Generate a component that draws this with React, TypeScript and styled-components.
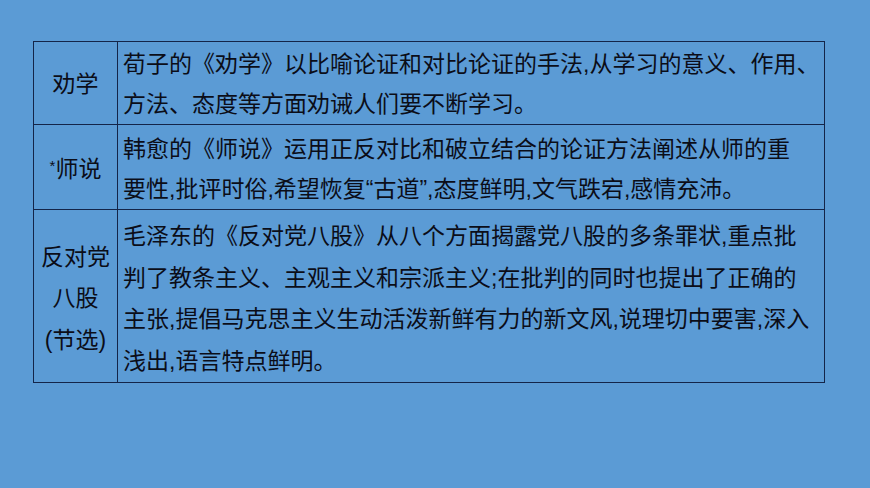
import React from "react";
import styled, { createGlobalStyle } from "styled-components";

const Global = createGlobalStyle`
  html, body {
    margin: 0;
    padding: 0;
    background: #5b9bd5;
  }
  body {
    font-family: "Liberation Sans", "Noto Sans CJK SC", sans-serif;
  }
`;

const Page = styled.div`
  width: 870px;
  height: 488px;
  box-sizing: border-box;
  padding: 41px 0 0 33px;
  background: #5b9bd5;
`;

const Table = styled.table`
  width: 792px;
  border-collapse: collapse;
  table-layout: fixed;
  font-family: "Liberation Sans", "Noto Sans CJK SC", sans-serif;
  font-size: 23px;
  color: #0b0d18;
`;

const Row = styled.tr<{ $h: number; $lh: number }>`
  height: ${(p) => p.$h}px;
  line-height: ${(p) => p.$lh}px;
`;

const TitleCell = styled.td<{ $pt: number }>`
  width: 84px;
  border: 1.5px solid #142549;
  text-align: center;
  vertical-align: middle;
  padding: ${(p) => p.$pt}px 0 0 0;
  box-sizing: border-box;
`;

const BodyCell = styled.td<{ $pt: number }>`
  border: 1.5px solid #142549;
  text-align: left;
  vertical-align: middle;
  padding: ${(p) => p.$pt}px 0 0 5px;
  white-space: nowrap;
  box-sizing: border-box;
`;

const Line = styled.div`
  display: block;
`;

const Star = styled.span`
  font-size: 15px;
  vertical-align: 6px;
  line-height: 0;
`;

const rows: {
  h: number;
  lh: number;
  pt: number;
  title: React.ReactNode[];
  lines: string[];
}[] = [
  {
    h: 82,
    lh: 40,
    pt: 2,
    title: ["劝学"],
    lines: [
      "荀子的《劝学》以比喻论证和对比论证的手法,从学习的意义、作用、",
      "方法、态度等方面劝诫人们要不断学习。",
    ],
  },
  {
    h: 84,
    lh: 40,
    pt: 4,
    title: [
      <>
        <Star>*</Star>师说
      </>,
    ],
    lines: [
      "韩愈的《师说》运用正反对比和破立结合的论证方法阐述从师的重",
      "要性,批评时俗,希望恢复“古道”,态度鲜明,文气跌宕,感情充沛。",
    ],
  },
  {
    h: 173,
    lh: 41.5,
    pt: 6,
    title: ["反对党", "八股", "(节选)"],
    lines: [
      "毛泽东的《反对党八股》从八个方面揭露党八股的多条罪状,重点批",
      "判了教条主义、主观主义和宗派主义;在批判的同时也提出了正确的",
      "主张,提倡马克思主义生动活泼新鲜有力的新文风,说理切中要害,深入",
      "浅出,语言特点鲜明。",
    ],
  },
];

export default function App() {
  return (
    <>
      <Global />
      <Page>
        <Table>
          <colgroup>
            <col style={{ width: 84 }} />
            <col />
          </colgroup>
          <tbody>
            {rows.map((r, i) => (
              <Row key={i} $h={r.h} $lh={r.lh}>
                <TitleCell $pt={r.pt}>
                  {r.title.map((t, j) => (
                    <Line key={j}>{t}</Line>
                  ))}
                </TitleCell>
                <BodyCell $pt={r.pt}>
                  {r.lines.map((t, j) => (
                    <Line key={j}>{t}</Line>
                  ))}
                </BodyCell>
              </Row>
            ))}
          </tbody>
        </Table>
      </Page>
    </>
  );
}
